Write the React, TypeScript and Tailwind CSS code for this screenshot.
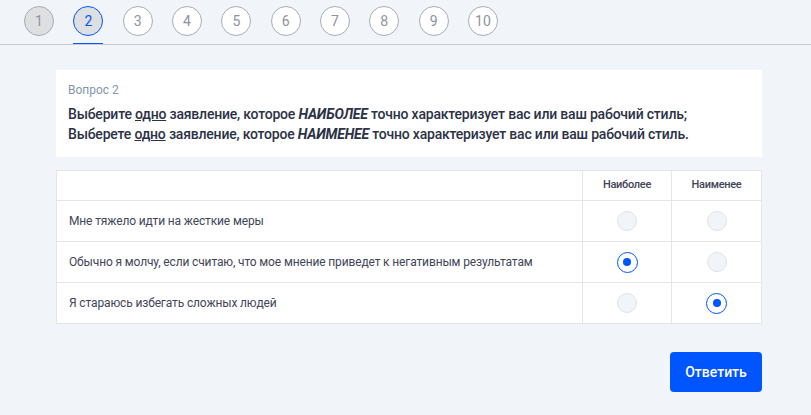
import { Fragment } from "react"

const steps = [1, 2, 3, 4, 5, 6, 7, 8, 9, 10]

const rows = [
  { text: "Мне тяжело идти на жесткие меры", most: false, least: false },
  { text: "Обычно я молчу, если считаю, что мое мнение приведет к негативным результатам", most: true, least: false },
  { text: "Я стараюсь избегать сложных людей", most: false, least: true },
]

function Radio({ checked }: { checked: boolean }) {
  if (checked) {
    return (
      <div className="w-[21px] h-[21px] rounded-full border border-[#0055ff] bg-white flex items-center justify-center">
        <div className="w-2 h-2 rounded-full bg-[#0055ff]" />
      </div>
    )
  }
  return <div className="w-5 h-5 rounded-full border border-[#dfe3e8] bg-[#f1f4f9]" />
}

export default function App() {
  return (
    <div className="w-[811px] h-[415px] overflow-hidden bg-[#f1f4f9] font-['Roboto',sans-serif]">
      {/* Steps */}
      <div className="h-[45px] flex gap-[19.33px] pl-6 border-b border-[#c5cad1]">
        {steps.map((n) => (
          <div key={n} className={n === 2 ? "w-[30px] h-[44px] pt-[6px] border-b border-[#0055ff]" : "w-[30px] h-[44px] pt-[6px]"}>
            <div
              className={
                n === 1
                  ? "w-[30px] h-[30px] rounded-full border border-[#a5adb8] bg-[#dedfe1] text-[#8b94a1] flex items-center justify-center text-sm"
                  : n === 2
                    ? "w-[30px] h-[30px] rounded-full border border-[#0055ff] bg-[#dedfe1] text-[#0055ff] flex items-center justify-center text-sm"
                    : "w-[30px] h-[30px] rounded-full border border-[#a5adb8] bg-white text-[#8b94a1] flex items-center justify-center text-sm"
              }
            >
              {n}
            </div>
          </div>
        ))}
      </div>

      <div className="ml-14 w-[706px] pt-[25px]">
        {/* Question */}
        <div className="h-[87px] bg-white px-3 pt-3">
          <div className="text-xs leading-4 text-[#8496ab] mb-[6px]">Вопрос 2</div>
          <div className="text-sm leading-5 font-medium tracking-[-0.2px] text-[#2b3245]">
            <p>
              Выберите <u>одно</u> заявление, которое <b className="italic font-bold">НАИБОЛЕЕ</b> точно характеризует вас или ваш рабочий стиль;
            </p>
            <p>
              Выберете <u>одно</u> заявление, которое <b className="italic font-bold">НАИМЕНЕЕ</b> точно характеризует вас или ваш рабочий стиль.
            </p>
          </div>
        </div>

        {/* Answers */}
        <div className="mt-[13px] h-[154px] bg-white border border-[#e2e5ea] grid grid-cols-[526px_89px_1fr] grid-rows-[30px_41px_41px_1fr] text-xs tracking-[-0.14px] text-[#3f4658]">
          <div className="border-b border-r border-[#e2e5ea]" />
          <div className="border-b border-r border-[#e2e5ea] flex items-center justify-center font-medium text-[11px] tracking-[-0.3px]">Наиболее</div>
          <div className="border-b border-[#e2e5ea] flex items-center justify-center font-medium text-[11px] tracking-[-0.3px]">Наименее</div>
          {rows.map((row, i) => (
            <Fragment key={i}>
              <div className={i < 2 ? "border-b border-r border-[#e2e5ea] flex items-center pl-3" : "border-r border-[#e2e5ea] flex items-center pl-3"}>
                {row.text}
              </div>
              <div className={i < 2 ? "border-b border-r border-[#e2e5ea] flex items-center justify-center" : "border-r border-[#e2e5ea] flex items-center justify-center"}>
                <Radio checked={row.most} />
              </div>
              <div className={i < 2 ? "border-b border-[#e2e5ea] flex items-center justify-center" : "flex items-center justify-center"}>
                <Radio checked={row.least} />
              </div>
            </Fragment>
          ))}
        </div>

        <div className="mt-7 flex justify-end">
          <button className="w-[92px] h-10 rounded bg-[#0055ff] text-white text-sm font-medium">Ответить</button>
        </div>
      </div>
    </div>
  )
}
